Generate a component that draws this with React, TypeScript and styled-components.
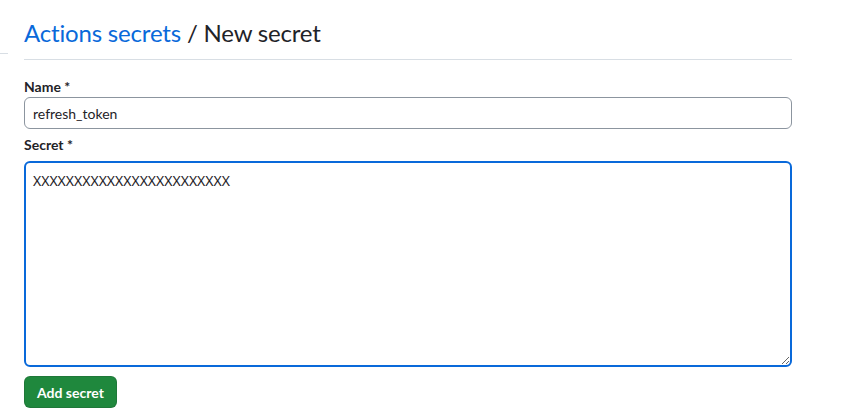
import React from 'react';
import styled, {createGlobalStyle} from "styled-components";

const GlobalStyle = createGlobalStyle`
  body {
    margin: 0;
    background: #ffffff;
    font-family: Lato, "Noto Sans", sans-serif;
    color: #1f2328;
  }
`

const Page = styled.div`
  display: flex;
  width: 854px;
  height: 420px;
  overflow: hidden;
`

const SideStub = styled.div`
  width: 8px;
  flex-shrink: 0;
  padding-top: 53px;

  & > div {
    border-top: 1px solid #d8dee4;
  }
`

const Main = styled.div`
  width: 768px;
  margin-left: 16px;
`

const Header = styled.div`
  border-bottom: 1px solid #d8dee4;
  padding: 15px 0 8px;
  margin-bottom: 17px;
`

const Title = styled.h2`
  margin: 0;
  font-size: 24px;
  font-weight: 400;
  line-height: 36px;
  letter-spacing: -0.18px;
  color: #1f2328;

  a {
    color: #0969da;
    text-decoration: none;
  }
`

const Field = styled.div`
  margin-bottom: 6px;
`

const Label = styled.label<{ $gap?: number }>`
  display: block;
  font-size: 14px;
  font-weight: 700;
  line-height: 20px;
  margin-bottom: ${p => p.$gap ?? 0}px;
`

const Input = styled.input`
  box-sizing: border-box;
  width: 100%;
  height: 32px;
  padding: 5px 8px;
  font-family: Lato, sans-serif;
  font-size: 14px;
  color: #1f2328;
  border: 1px solid #8c959f;
  border-radius: 6px;
  outline: none;
`

const TextArea = styled.textarea<{ $focused?: boolean }>`
  box-sizing: border-box;
  display: block;
  width: 100%;
  height: 206px;
  padding: 8px 7px;
  font-family: "Noto Sans", sans-serif;
  font-size: 14px;
  line-height: 20px;
  color: #1f2328;
  border: ${p => p.$focused ? '2px solid #0969da' : '1px solid #8c959f'};
  border-radius: 6px;
  outline: none;
  resize: vertical;
`

const Button = styled.button`
  margin-top: 3px;
  height: 32px;
  padding: 0 12px;
  font-family: Lato, sans-serif;
  font-size: 14px;
  font-weight: 700;
  color: #ffffff;
  background: #1f883d;
  border: 1px solid rgba(31, 35, 40, 0.15);
  border-radius: 6px;
  cursor: pointer;
`

export default function App() {
    return (
        <>
            <GlobalStyle/>
            <Page>
                <SideStub><div/></SideStub>
                <Main>
                    <Header>
                        <Title><a href="#">Actions secrets</a> / New secret</Title>
                    </Header>
                    <Field>
                        <Label>Name *</Label>
                        <Input defaultValue="refresh_token"/>
                    </Field>
                    <Field>
                        <Label $gap={6}>Secret *</Label>
                        <TextArea $focused defaultValue="XXXXXXXXXXXXXXXXXXXXXXXX"/>
                    </Field>
                    <Button>Add secret</Button>
                </Main>
            </Page>
        </>
    );
}
